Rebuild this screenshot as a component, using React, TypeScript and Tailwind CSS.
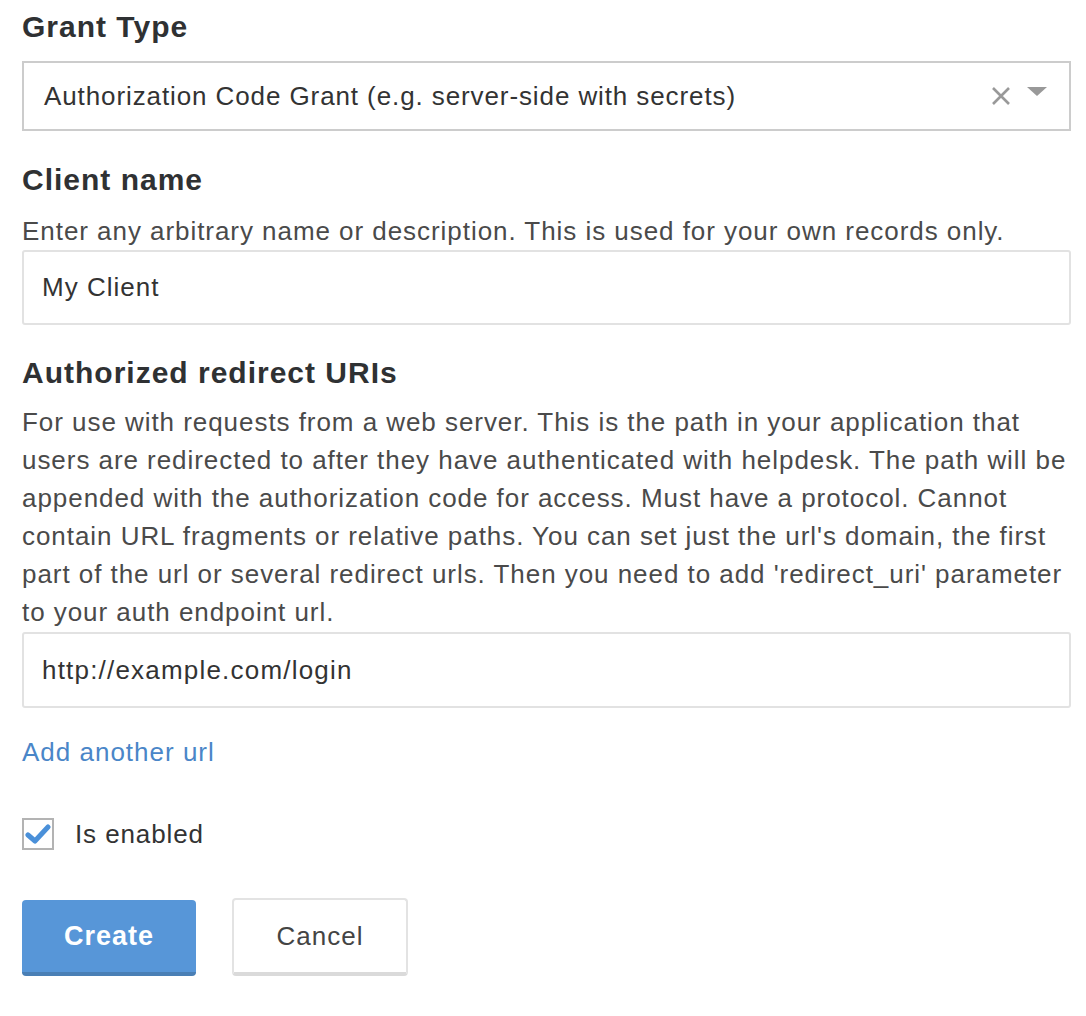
import React, { useState } from 'react'

const font = { fontFamily: '"Liberation Sans", Arial, sans-serif' }

const App: React.FC = () => {
  const [name, setName] = useState('My Client')
  const [url, setUrl] = useState('http://example.com/login')
  const [enabled, setEnabled] = useState(true)

  return (
    <div className="min-h-screen bg-white px-[22px] pt-[8px] text-[#333]" style={font}>
      {/* Grant type */}
      <h2 className="text-[30px] leading-[38px] font-bold tracking-[1px] text-[#2f3133]">Grant Type</h2>
      <div className="mt-[15px] h-[70px] w-[1049px] border-2 border-[#cccccc] flex items-center pl-[20px] pr-[22px]">
        <span className="flex-1 text-[26px] tracking-[0.9px] text-[#333]">Authorization Code Grant (e.g. server-side with secrets)</span>
        <svg width="20" height="20" viewBox="0 0 20 20" className="mr-[16px]">
          <path d="M2 2 L18 18 M18 2 L2 18" stroke="#999" strokeWidth="2.6" fill="none" />
        </svg>
        <svg width="20" height="10" viewBox="0 0 20 10" className="mb-[9px]">
          <path d="M0 0 L20 0 L10 9 Z" fill="#999" />
        </svg>
      </div>

      {/* Client name */}
      <h2 className="mt-[30px] text-[30px] leading-[38px] font-bold tracking-[1px] text-[#2f3133]">Client name</h2>
      <p className="mt-[13px] text-[26px] leading-[38px] tracking-[0.95px] text-[#4a4a4a] whitespace-nowrap">
        Enter any arbitrary name or description. This is used for your own records only.
      </p>
      <input
        value={name}
        onChange={(e) => setName(e.target.value)}
        className="block h-[75px] w-[1049px] rounded-[3px] border-2 border-[#e2e2e2] pl-[18px] text-[26px] tracking-[1px] text-[#333] outline-none"
        style={font}
      />

      {/* Redirect URIs */}
      <h2 className="mt-[29px] text-[30px] leading-[38px] font-bold tracking-[1px] text-[#2f3133]">Authorized redirect URIs</h2>
      <p className="mt-[11px] text-[26px] leading-[38px] tracking-[0.95px] text-[#4a4a4a] whitespace-nowrap">
        For use with requests from a web server. This is the path in your application that<br />
        users are redirected to after they have authenticated with helpdesk. The path will be<br />
        appended with the authorization code for access. Must have a protocol. Cannot<br />
        contain URL fragments or relative paths. You can set just the url's domain, the first<br />
        part of the url or several redirect urls. Then you need to add 'redirect_uri' parameter<br />
        to your auth endpoint url.
      </p>
      <input
        value={url}
        onChange={(e) => setUrl(e.target.value)}
        className="mt-[1px] block h-[76px] w-[1049px] rounded-[3px] border-2 border-[#e2e2e2] pl-[18px] text-[26px] tracking-[1.2px] text-[#333] outline-none"
        style={font}
      />
      <a href="#" className="mt-[25px] block w-fit text-[26px] leading-[38px] tracking-[1px] text-[#4a86c8]">Add another url</a>

      {/* Enabled */}
      <label className="mt-[47px] flex h-[32px] items-center gap-[21px] cursor-pointer">
        <span
          onClick={() => setEnabled(!enabled)}
          className="flex h-[32px] w-[32px] items-center justify-center border-2 border-[#b3b3b3] bg-white"
        >
          {enabled && (
            <svg width="26" height="22" viewBox="0 0 26 22">
              <path d="M3 12 L10 18 L23 4" stroke="#4a90d9" strokeWidth="5" strokeLinecap="round" strokeLinejoin="round" fill="none" />
            </svg>
          )}
        </span>
        <span className="text-[26px] tracking-[0.9px] text-[#333]">Is enabled</span>
      </label>

      {/* Actions */}
      <div className="mt-[48px] flex items-end gap-[36px]">
        <button
          className="h-[76px] w-[174px] rounded-[4px] border-b-[4px] border-[#4a7fb5] bg-[#5796d8] text-[27px] font-bold tracking-[1px] text-white"
          style={font}
        >
          Create
        </button>
        <button
          className="h-[78px] w-[176px] rounded-[4px] border-2 border-b-[4px] border-[#e3e3e3] border-b-[#dadada] bg-white text-[26px] tracking-[1px] text-[#444]"
          style={font}
        >
          Cancel
        </button>
      </div>
    </div>
  )
}

export default App
